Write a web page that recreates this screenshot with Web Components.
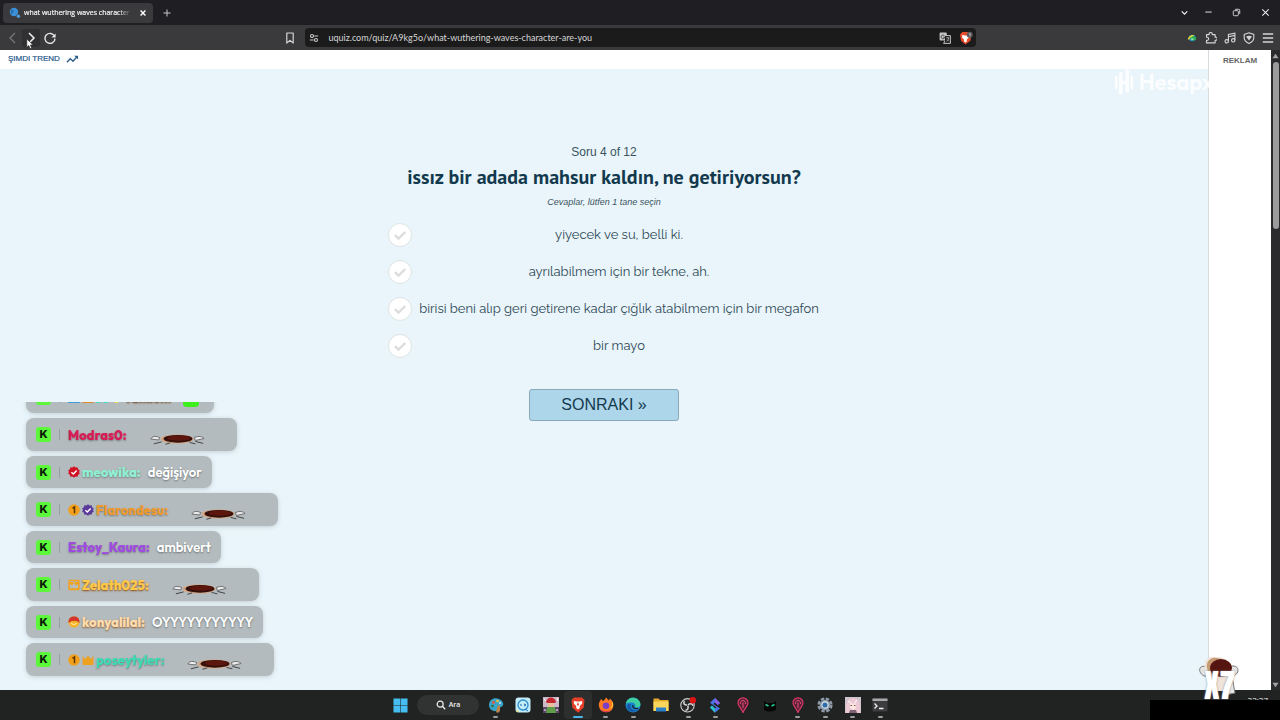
<!DOCTYPE html>
<html lang="tr">
<head>
<meta charset="utf-8">
<meta name="viewport" content="width=device-width, initial-scale=1">
<title>what wuthering waves character are you</title>
<style>
  html, body { margin: 0; height: 100%; }
  body { font-family: "Open Sans", "Noto Sans", sans-serif; background: #1f1e23; overflow: hidden; }
</style>
</head>
<body>
<desktop-screen></desktop-screen>
<script>
const ICONS = {
  back: ['0 0 12 12', '<path d="M8 1 3 6l5 5" fill="none" stroke="#77777a" stroke-width="1.3"/>'],
  forward: ['0 0 12 12', '<path d="M4 1l5 5-5 5" fill="none" stroke="#eee" stroke-width="1.5"/>'],
  reload: ['0 0 12 12', '<path d="M10.6 4.4A5 5 0 1 0 11 6.6" fill="none" stroke="#e4e4e4" stroke-width="1.4"/><path d="M11.6 1.4v4.2H7.4z" fill="#e4e4e4"/>'],
  bookmark: ['0 0 12 12', '<path d="M2.8 1h6.4v10L6 8.4 2.8 11z" fill="none" stroke="#d4d4d4" stroke-width="1.2" stroke-linejoin="round"/>'],
  tune: ['0 0 12 12', '<g fill="none" stroke="#c9c9c9" stroke-width="1.3"><circle cx="3.6" cy="3.6" r="1.8"/><path d="M6.3 3.6H11M1 8.4h4.700"/><circle cx="8.4" cy="8.4" r="1.8"/></g>'],
  translate: ['0 0 12 12', '<rect x=".6" y=".6" width="7.2" height="8" rx="1" fill="#c4c4c4"/><path d="M6 3.6h5.4v7.8H4.6l1.4-2.6" fill="#1b1b1c" stroke="#c4c4c4"/><path d="M5.400 3.600a1.900 1.900 0 1 0 0 2.600V5H4.200" fill="none" stroke="#333" stroke-width=".8"/><path d="M7.200 5.800h3.200M8.800 5v.8M7.600 9.400c1.300-.7 2-1.800 2.100-3.400M8 7.400l2 2" fill="none" stroke="#c4c4c4" stroke-width=".7"/>'],
  lion: ['0 0 14 14', '<path d="M3.4 1h6l3 2.6-1 6.200L6.400 13.400 2 9.800l-1-6.200z" fill="#e8492a"/><path d="M3.400 3.800l2 .6h2.200l2-.6.2 2.600-2 2.200v2l-1.400 1-1.400-1v-2L3 6.400z" fill="#fff"/><circle cx="10.700" cy="3.800" r="3" fill="#5a5a5d"/><path d="M10.200 2.800l.9-.5v3" stroke="#ddd" stroke-width=".7" fill="none"/>'],
  trend: ['0 0 14 10', '<path d="M1 8.600l3.600-3.800 3 2.600L12 2.400" fill="none" stroke="#2d5d8c" stroke-width="1.5"/><path d="M8.800 1.400h4.200v4.200z" fill="#2d5d8c"/>'],
  plus: ['0 0 12 12', '<path d="M6 2.500v7M2.500 6h7" stroke="#c8c8cb" stroke-width="1" fill="none"/>'],
  close: ['0 0 12 12', '<path d="M2.500 2.500l7 7m0-7l-7 7" stroke="#eee" stroke-width="1.1" fill="none"/>'],
  tabclose: ['0 0 12 12', '<path d="M3.600 3.600l4.800 4.800m0-4.800L3.600 8.400" stroke="#fff" stroke-width="1.400" fill="none"/>'],
  down: ['0 0 12 12', '<path d="M3 4.800l3 3 3-3" stroke="#eee" stroke-width="1.400" fill="none"/>'],
  min: ['0 0 12 12', '<path d="M2.500 5.500h7" stroke="#ddd" stroke-width="1.100"/>'],
  max: ['0 0 12 12', '<g fill="none" stroke="#ddd"><rect x="2.500" y="4" width="5.500" height="5.500" rx="1"/><path d="M4.500 2.500h4a1 1 0 0 1 1 1v4"/></g>'],
  idm: ['0 0 12 12', '<circle cx="6.400" cy="6" r="4" fill="#2c8fd0"/><path d="M1 8.500C1 4 5 2 8.600 2.400L6.400 5z" fill="#e9d33a"/><path d="M3 6l6-3v2h2v3H8v2z" fill="#27b04b"/><path d="M5 7.400h3" stroke="#fff"/>'],
  puzzle: ['0 0 12 12', '<path d="M1.500 2.600h2.700a1.600 1.600 0 1 1 3 0h2.900v2.600a1.600 1.600 0 1 1 0 3v2.700H1.500V8.300a1.600 1.600 0 1 0 0-3z" fill="none" stroke="#d4d4d4" stroke-width="1.100" stroke-linejoin="round"/>'],
  music: ['0 0 12 12', '<g fill="none" stroke="#d4d4d4" stroke-width="1.100"><circle cx="2.700" cy="9.300" r="1.700"/><circle cx="9.200" cy="8.300" r="1.700"/><path d="M4.400 9.300V2.400l6.500-1.300v7.200M4.400 4.700l6.500-1.300"/></g>'],
  shield: ['0 0 12 12', '<path d="M6 .8l4.800 1.600v3.400c0 2.700-2 4.500-4.800 5.600C3.200 10.300 1.200 8.500 1.200 5.800V2.400z" fill="none" stroke="#d4d4d4" stroke-width="1.100"/><path d="M3 4.600c2-1.300 4-1.300 6 0L6 8.400z" fill="#d4d4d4"/>'],
  menu: ['0 0 12 12', '<path d="M.8 2h10.400M.8 6h10.400M.8 10h10.400" stroke="#d4d4d4" stroke-width="1.300"/>'],
  favicon: ['0 0 12 12', '<circle cx="5" cy="5" r="4.200" fill="#3b8fd6"/><path d="M2 3.400c2-1.600 3 .4 2 2S2 7 2 7z" fill="#276ca8"/><circle cx="9.400" cy="9.200" r="1.700" fill="#4b9fe0"/>'],
  check: ['0 0 24 24', '<path d="M7 12.200l3.500 3.400L17.300 9" fill="none" stroke="#dcdcdc" stroke-width="2.400"/>'],
  emote: ['0 0 58 12', '<path d="M10 4.500C4 2 2 4 1 6l8 1zM46 4.500c5-2 8-1 10 1l-9 2z" fill="#eee" stroke="#555" stroke-width=".8"/><ellipse cx="28" cy="6" rx="17" ry="4.600" fill="#d6a583"/><ellipse cx="29" cy="5.800" rx="15" ry="4" fill="#32100b"/><ellipse cx="30" cy="5.200" rx="12" ry="2.700" fill="#5c160e"/><path d="M12 9l-8 2M21 10l-5 1.500M41 9.600l6 1.400M47 8.500l8 2" stroke="#333" stroke-width=".9" fill="none"/>'],
  green: ['0 0 16 16', '<rect width="16" height="16" rx="4" fill="#3df01b"/>'],
  num: ['0 0 12 12', '<circle cx="6" cy="6" r="5.800" fill="#f2a01c"/><path d="M4.500 4.300L6.500 3v6.200" stroke="#5a3405" stroke-width="1.500" fill="none"/>'],
  verified: ['0 0 12 12', '<path d="M6 .2l1.600 1.200 2-.1.500 1.900 1.700 1.100L11.100 6l.7 1.700-1.700 1.100-.5 1.900-2-.1L6 11.800l-1.600-1.200-2 .1-.5-1.900L.2 7.700.9 6 .2 4.300l1.700-1.100.5-1.900 2 .1z" fill="var(--tone,#5b3a9c)"/><path d="M3.400 6.200l1.900 1.800 3.400-3.600" stroke="#fff" stroke-width="1.400" fill="none"/>'],
  crown: ['0 0 12 12', '<path d="M.6 2l2.800 3L6 1.400 8.600 5l2.800-3v9H.6z" fill="#eda11e"/>'],
  box: ['0 0 12 12', '<rect x=".4" y=".8" width="11.200" height="10.400" rx="1" fill="#f0a21c"/><path d="M2 9.200V5l2 1.400L6 4l2 2.400L10 5v4.200z" fill="#b7bdbf"/><path d="M2 2.400h3l1 1.400 1-1.400h3" fill="none" stroke="#b7bdbf"/>'],
  ball: ['0 0 12 12', '<circle cx="6" cy="6" r="5.600" fill="#f3b32a"/><path d="M.6 7C0 2 3 .4 6 .4S12 2 11.400 7C9 4 4 4 .6 7z" fill="#d5362c"/><path d="M3 7.500q3 2 6 0" stroke="#fff2b0" fill="none"/>'],
  blue: ['0 0 12 12', '<rect width="12" height="12" rx="1" fill="#3a9bdc"/>'],
  orange: ['0 0 12 12', '<rect width="12" height="12" rx="1" fill="#df8a2c"/>'],
  teal: ['0 0 12 12', '<path d="M0 0h12v12H7.500V9h-3v3H0z" fill="#43dcc0"/>'],
  bulb: ['0 0 12 12', '<path d="M4 0h5v8.500L8 12H5L4 8.500z" fill="#efe04a"/>'],
  windows: ['0 0 16 16', '<path d="M.5.5h7.200v7.200H.5zM8.300.5h7.200v7.200H8.300zM.5 8.300h7.200v7.200H.5zM8.300 8.300h7.200v7.200H8.300z" fill="#45bdf0"/>'],
  search: ['0 0 12 12', '<circle cx="5" cy="5" r="3.600" fill="none" stroke="#eee" stroke-width="1.400"/><path d="M7.600 7.600L11 11" stroke="#eee" stroke-width="1.600"/>'],
  paint: ['0 0 16 16', '<path d="M1 8c0-5 5-8 10-6s5.500 7 2 8c-2 .5-3 1.500-3.500 3-1 2.500-8.500 1-8.500-5z" fill="#37a5c8"/><path d="M8 15l1.500-6L12 8v6l-2 2z" fill="#b9854b"/><circle cx="5.500" cy="5.500" r="1.400" fill="#e8553b"/><circle cx="9.500" cy="4" r="1.300" fill="#f3c13a"/><circle cx="12" cy="6" r="1.100" fill="#c9e7f2"/><circle cx="4.500" cy="9" r="1.200" fill="#2b6c3d"/>'],
  chat: ['0 0 16 16', '<rect x=".5" y=".5" width="15" height="15" rx="3" fill="#c3ecfa"/><circle cx="8" cy="8" r="5" fill="none" stroke="#2d8fd1" stroke-width="1.300"/><path d="M5 8h2M9 7l2 1-2 1M10 12l3 2" stroke="#1d6eae" fill="none"/><path d="M1 12l3 3H2z" fill="#e9e264"/>'],
  game: ['0 0 16 16', '<rect width="16" height="16" fill="#cdb9c8"/><path d="M0 10h16v6H0z" fill="#5b4468"/><path d="M3 5c1-6 9-6 10 0l-1 1H4z" fill="#c52731"/><path d="M5 6h6v4H5z" fill="#e9bf9d"/><path d="M4 10h8l1 6H3z" fill="#5f9e48"/><path d="M1 2l2 2M14 1l1 3M1 13h2M13 13h2" stroke="#fff"/>'],
  brave: ['0 0 16 16', '<path d="M4 .5h8l2.500 2.500-.8 7.500L8 15.800l-5.700-5.300L1.500 3z" fill="#e6402a"/><path d="M4 4l2.600.6h2.800L12 4l.2 2.600L9.800 9v2L8 12.600 6.200 11V9L3.800 6.600z" fill="#fff"/><path d="M8 5l-1 2.500L8 9l1-1.500z" fill="#e6402a"/>'],
  firefox: ['0 0 16 16', '<path d="M2 4l1-2 2 2c2-1 2-2 3-3.500 2 2 2.500 3 2.500 3S12 2 12 1.500c3 3 4 6 3 9A7.300 7.300 0 0 1 1 9.500C.5 7 1 5.500 2 4z" fill="#ff7a22"/><path d="M12 1.500c3 4 3 8-.5 10 3.500 0 4-3.500 3.500-5.500z" fill="#ffce3b"/><circle cx="8" cy="8.800" r="3.300" fill="#7b3fc6"/><path d="M2 11c3 4 8 4 11 1-2 4-8 5-11-1z" fill="#e5305f"/>'],
  edge: ['0 0 16 16', '<circle cx="8" cy="8" r="7.500" fill="#1c82cf"/><path d="M1 6.500C2-1 14-1.500 15.500 7c0 3-3 4-5.500 3 1.500-3-1-5-4-4.500C4 5.500 2 6 1 6.500z" fill="#3dcf9f"/><path d="M6 7c-2 3 1 7 6 6-3 3-9 2-10-3C1.500 8 4 6 6 7z" fill="#155ba5"/><path d="M8 8c-1 2 1 4 5 3.500" stroke="#20232a" stroke-width="1.300" fill="none"/>'],
  folder: ['0 0 16 16', '<path d="M.5 1.500h5L7 3h8.500v11H.5z" fill="#e8ab2c"/><path d="M.5 4.500h15V14H.5z" fill="#fbd65d"/><path d="M3 10.500h10V14.500H3z" fill="#2b7fcb"/>'],
  obs: ['0 0 16 16', '<circle cx="7.500" cy="8.300" r="6.700" fill="#28282a" stroke="#d0d0d0" stroke-width="1.100"/><path d="M7 8c-3 0-4-2-2.500-4M8 8c2-2 4.500-1.500 5 .8M7.700 8.700c1.200 2.500 0 4.500-2.300 4.600" fill="none" stroke="#d0d0d0" stroke-width="1.600"/><circle cx="12.800" cy="3.200" r="3.200" fill="#e11414"/>'],
  gem: ['0 0 16 16', '<path d="M8 1l5 5-2.200 2L8 5.400 6.400 7 13 11.500 8 15.800 3 10.500l2-2 3 3 1.300-1.300L3 5.800z" fill="#4a74e8"/><path d="M8 1l5 5-2.200 2L8 5.400z" fill="#8b5ce6"/><path d="M3 10.500l2-2 3 3v4.300z" fill="#29c2c8"/>'],
  pin: ['0 0 16 16', '<path d="M8 15.500C6.500 11.500 3 9.500 3 5.800a5 5 0 0 1 10 0c0 3.700-3.500 5.700-5 9.700z" fill="#5d2038" stroke="#d93a68" stroke-width="1.200"/><path d="M8 11V5.500M5.700 7a2.500 2.500 0 1 1 4.600 0" fill="none" stroke="#e5507a"/>'],
  cat: ['0 0 16 16', '<path d="M2 4l3 2h6l3-2v9q-6 3-12 0z" fill="#050706"/><path d="M3.500 7.500l3 1.500M12.500 7.500l-3 1.500" stroke="#23c78b" stroke-width="1.600"/>'],
  gear: ['0 0 16 16', '<circle cx="8" cy="8" r="6.300" fill="none" stroke="#8d99a6" stroke-width="2.600" stroke-dasharray="3.400 1.550"/><circle cx="8" cy="8" r="5.300" fill="#8d99a6"/><circle cx="8" cy="8" r="3.100" fill="#2d6ea8" stroke="#dfe7ee" stroke-width="1.100"/>'],
  anime: ['0 0 16 16', '<rect width="16" height="16" fill="#cfc3cc"/><path d="M1 16C0 6 3 1 8 1s8 5 7 15z" fill="#edc9d3"/><path d="M5 7h6v4l-3 2-3-2z" fill="#fae7e0"/><path d="M5.500 8.500h1.500M9 8.500h1.500" stroke="#87435c" stroke-width="1.200"/><path d="M5 13h6l1 3H4z" fill="#7e6376"/><path d="M3 4l4 3M12 3L9 7" stroke="#fff"/>'],
  terminal: ['0 0 16 16', '<rect x=".5" y="1.500" width="15" height="13" rx="1" fill="#3d3d40"/><path d="M.5 1.500h15v2.500H.5z" fill="#a9a9ac"/><path d="M2.500 6.500L5 9l-2.500 2.500M7 11.500h4.500" stroke="#eee" stroke-width="1.300" fill="none"/>'],
  brand: ['0 0 22 28', '<g fill="#fff"><rect x="1" y="7" width="3" height="15" rx="1.500"/><path d="M5.500 5a2 2 0 0 1 4 0v7.500h3V1a1 1 0 0 1 4 3v20a2 2 0 0 1-4 0v-7.500h-3V27a1 1 0 0 1-4-3z"/><rect x="18" y="7" width="3" height="15" rx="1.500"/></g>'],
  cup: ['0 0 44 44', '<path d="M10 13C3 10 1 18 8 22l5 0M36 12c8-1 8 9 0 10l3 17-10 2" fill="#e4e4e4" stroke="#777"/><path d="M9 16C7 6 13 2 19 3c10 0 18 4 17 18l-4 16H14z" fill="#efe3da"/><path d="M12 17C8 8 15 3 20 4l6 1-8 8-1 11z" fill="#c69b74"/><ellipse cx="25" cy="14" rx="11" ry="9" fill="#551511"/>'],
  cursor: ['0 0 10 14', '<path d="M1 .8v10.400l2.500-2.200 1.700 3.800 2-.9-1.700-3.700H9z" fill="#fff" stroke="#222" stroke-width=".8"/>'],
  up: ['0 0 8 6', '<path d="M4 .5l3.500 5h-7z" fill="#a2a2a2"/>'],
  dn: ['0 0 8 6', '<path d="M4 5.500L.5.500h7z" fill="#a2a2a2"/>'],
};

function component(name, css, html, setup) {
  const template = document.createElement('template');
  template.innerHTML = `<style>*{box-sizing:border-box}${css}</style>${html}`;
  customElements.define(name, class extends HTMLElement {
    connectedCallback() {
      if (this.shadowRoot) return;
      this.attachShadow({ mode: 'open' }).append(template.content.cloneNode(true));
      if (setup) setup(this, this.shadowRoot);
    }
  });
}

function makeIcon(name) {
  const icon = document.createElement('ui-icon');
  icon.setAttribute('name', name);
  return icon;
}

component('ui-icon',
  `:host{display:inline-flex;flex:none;width:12px;height:12px} svg{display:block;width:100%;height:100%}`,
  `<svg aria-hidden="true"></svg>`,
  (host, root) => {
    const [box, body] = ICONS[host.getAttribute('name')];
    const svg = root.querySelector('svg');
    svg.setAttribute('viewBox', box);
    svg.innerHTML = body;
  });

component('icon-button',
  `:host{display:inline-flex;flex:none}
   button{display:grid;place-items:center;width:var(--w,18px);height:18px;padding:0;border:0;border-radius:3px;background:var(--bg,none)}
   ui-icon{width:var(--icon,12px);height:var(--icon,12px)}`,
  `<button type="button"></button>`,
  (host, root) => {
    const button = root.querySelector('button');
    button.setAttribute('aria-label', host.getAttribute('label'));
    button.append(makeIcon(host.getAttribute('icon')));
  });

component('tab-strip',
  `:host{display:flex;align-items:center;height:25px;padding:0 0 0 3px;background:#1f1e23}
   .tab{display:flex;align-items:center;gap:3px;width:150px;height:20px;padding:0 1px 0 6px;border-radius:4px;background:#3a3a3d}
   .title{flex:1;min-width:0;overflow:hidden;white-space:nowrap;font:7px/12px "Open Sans","Noto Sans",sans-serif;-webkit-text-stroke:.2px #f2f2f2;color:#f2f2f2;-webkit-mask-image:linear-gradient(90deg,#000 88%,transparent);mask-image:linear-gradient(90deg,#000 88%,transparent)}
   .windowctl{display:flex;margin-left:auto}
   .windowctl icon-button{--w:28px;--icon:11px}
   .new{margin-left:5px}`,
  `<div class="tab"><ui-icon name="favicon"></ui-icon><span class="title">what wuthering waves character are you</span><icon-button icon="tabclose" label="Sekmeyi kapat"></icon-button></div>
   <icon-button class="new" icon="plus" label="Yeni sekme"></icon-button>
   <div class="windowctl"><icon-button icon="down" label="Sekme ara" style="--w:20px"></icon-button><icon-button icon="min" label="Küçült"></icon-button><icon-button icon="max" label="Geri yükle"></icon-button><icon-button icon="close" label="Kapat" style="--w:30px"></icon-button></div>`);

component('browser-toolbar',
  `:host{display:flex;align-items:center;height:25px;background:#3a3a3c}
   .nav{flex:279 1 0;display:flex;padding-left:4px}
   .mid{flex:698 1 0;display:flex;align-items:center;gap:6px}
   .ext{flex:303 1 0;display:flex;justify-content:flex-end;padding-right:3px}
   .nav,.mid,.ext{min-width:0;box-sizing:border-box}
   .url{flex:1;display:flex;align-items:center;height:19px;border-radius:4px;background:#1b1b1c}
   input{flex:1;min-width:0;height:18px;padding:0 0 0 5px;border:0;background:none;outline:0;color:#d6d6d6;font:9px/18px Lato,"Open Sans",sans-serif}
   .nav icon-button:nth-child(2){--bg:#303033}
   .ext icon-button{--w:19px}`,
  `<div class="nav"><icon-button icon="back" label="Geri"></icon-button><icon-button icon="forward" label="İleri"></icon-button><icon-button icon="reload" label="Yenile" style="--w:20px"></icon-button></div>
   <div class="mid"><icon-button icon="bookmark" label="Yer işareti"></icon-button>
     <div class="url"><icon-button icon="tune" label="Site bilgileri" style="--icon:10px"></icon-button><input type="text" aria-label="Adres" value="uquiz.com/quiz/A9kg5o/what-wuthering-waves-character-are-you"><icon-button icon="translate" label="Çevir" style="--w:22px"></icon-button><icon-button icon="lion" label="Brave Shields" style="--w:20px;--icon:14px"></icon-button></div></div>
   <div class="ext"><icon-button icon="idm" label="IDM" style="--icon:10px"></icon-button><icon-button icon="puzzle" label="Uzantılar"></icon-button><icon-button icon="music" label="Medya"></icon-button><icon-button icon="shield" label="VPN"></icon-button><icon-button icon="menu" label="Menü"></icon-button></div>`);

component('quiz-answer',
  `:host{display:block}
   label{display:flex;align-items:center;gap:7px;height:37px;padding-right:1px}
   .mark{display:grid;flex:none;width:24px;height:24px}
   .mark>*{grid-area:1/1}
   input{appearance:none;width:24px;height:24px;margin:0;border:1px solid #dfe3e4;border-radius:50%;background:#fff}
   ui-icon{width:24px;height:24px;pointer-events:none}
   .text{flex:1;text-align:center;white-space:nowrap;font:13px/20px Raleway,Lato,sans-serif;color:#2f4957}`,
  `<label><span class="mark"><input type="radio" name="answer"><ui-icon name="check"></ui-icon></span><span class="text"><slot></slot></span></label>`);

component('quiz-form',
  `:host{display:block;flex:1;background:#e9f5fa;font-family:"Liberation Sans",Arial,sans-serif;text-align:center}
   form{display:flex;flex-direction:column;align-items:center;padding-top:74px}
   .count{font-size:12px;line-height:18px;color:#3b5461}
   h1{margin:0;font:700 20px/32px "PT Sans","Noto Sans",sans-serif;color:#12394d}
   .hint{margin:0 0 5px;font-size:9px;line-height:18px;font-style:italic;color:#3b5461}
   .answers{width:432px;max-width:100%}
   button{margin-top:25px;width:150px;height:32px;padding:0;border:1px solid #8aa9b8;border-radius:3px;background:#aed6ea;color:#12394d;font:16px/30px "Liberation Sans",Arial,sans-serif}`,
  `<form><div class="count">Soru 4 of 12</div><h1>issız bir adada mahsur kaldın, ne getiriyorsun?</h1><p class="hint">Cevaplar, lütfen 1 tane seçin</p>
   <div class="answers"><quiz-answer>yiyecek ve su, belli ki.</quiz-answer><quiz-answer>ayrılabilmem için bir tekne, ah.</quiz-answer><quiz-answer>birisi beni alıp geri getirene kadar çığlık atabilmem için bir megafon</quiz-answer><quiz-answer>bir mayo</quiz-answer></div>
   <button type="button">SONRAKI »</button></form>`);

component('scroll-bar',
  `:host{display:flex;flex-direction:column;align-items:center;width:9px;padding:3px 0 2px;background:#2b2b2d}
   ui-icon{width:7px;height:6px}
   .track{flex:1;width:6px;margin:3px 0}
   .thumb{height:27%;border-radius:3px;background:#9c9c9c}`,
  `<ui-icon name="up"></ui-icon><div class="track"><div class="thumb"></div></div><ui-icon name="dn"></ui-icon>`);

component('quiz-page',
  `:host{display:flex;min-height:0;background:#fff}
   main{flex:1;display:flex;flex-direction:column}
   nav{display:flex;height:19px;padding-left:8px}
   a{display:flex;align-items:center;gap:6px;height:18px;font:8px/18px "Liberation Sans",Arial,sans-serif;color:#24578a;text-decoration:none;-webkit-text-stroke:.2px #24578a}
   a ui-icon{width:13px;height:10px}
   aside{width:63px;border-left:1px solid #d5dadd;padding-top:5px;text-align:center;font:700 8px/12px "Liberation Sans",Arial,sans-serif;color:#666}`,
  `<main><nav><a href="#trend">ŞIMDI TREND <ui-icon name="trend"></ui-icon></a></nav><quiz-form></quiz-form></main><aside>REKLAM</aside><scroll-bar></scroll-bar>`);

component('chat-message',
  `:host{display:flex;flex:none;align-items:center;width:max-content;height:32px;box-sizing:border-box;padding:0 10px;border-radius:8px;background:#b3bbbe;box-shadow:0 1px 4px #8a979c66;font:600 13px/20px Outfit,Lato,sans-serif;color:#fff}
   :host([emote]){height:33px}
   .k{display:grid;place-items:center;width:15px;height:15px;border-radius:3px;background:#5cf63a;color:#0b1a07;font:800 11px/15px Inter,sans-serif}
   .bar{width:1px;height:11px;margin:0 8px;background:#969fa2}
   .badges{display:flex;gap:2px;margin-right:2px}
   .badges:empty{display:none}
   b{font-weight:800;color:var(--name);text-shadow:0 1px 2px var(--glow,#0005)}
   .body{margin-left:7px;text-shadow:0 1px 2px #0006}
   :host([emote]) .body{display:grid;place-items:center;width:90px;height:12px;margin:9px 4px 0 6px}
   .body ui-icon{width:56px;height:12px}`,
  `<span class="k">K</span><span class="bar"></span><span class="badges"></span><b></b><span class="body"><slot></slot></span>`,
  (host, root) => {
    root.querySelector('b').textContent = host.getAttribute('name') + ':';
    for (const name of (host.getAttribute('badges') || '').split(' ').filter(Boolean))
      root.querySelector('.badges').append(makeIcon(name));
    if (host.hasAttribute('emote')) root.querySelector('.body').append(makeIcon('emote'));
  });

component('chat-overlay',
  `:host{display:flex;flex-direction:column;justify-content:flex-end;align-items:flex-start;gap:5px;box-sizing:border-box;overflow:hidden;padding:0 20px 14px}
   .reply{width:16px;height:16px;margin:0 5px 0 4px;vertical-align:middle}`,
  `<chat-message name="Talkien" badges="blue orange teal bulb" style="--name:#fff0b8;--glow:#6b3a10"><ui-icon class="reply" name="green"></ui-icon></chat-message>
   <chat-message name="Modras0" emote style="--name:#d81b56"></chat-message>
   <chat-message name="meowika" badges="verified" style="--name:#8ff0d2;--tone:#d01224">değişiyor</chat-message>
   <chat-message name="Flarondesu" badges="num verified" emote style="--name:#ee9a2e"></chat-message>
   <chat-message name="Estoy_Kaura" style="--name:#a04be0">ambivert</chat-message>
   <chat-message name="Zelath025" badges="box" emote style="--name:#ffc94a;--glow:#8c4a12"></chat-message>
   <chat-message name="konyalilal" badges="ball" style="--name:#ffdcae;--glow:#8a5a2a">OYYYYYYYYYYY</chat-message>
   <chat-message name="poseytyler" badges="num crown" emote style="--name:#3fd9b4"></chat-message>`);

component('task-bar',
  `:host{display:flex;align-items:center;justify-content:center;gap:3px;height:30px;background:#202322}
   button{display:grid;place-items:center;padding:0;border:0;border-radius:4px;background:none}
   .start{width:28px;height:28px}
   .start ui-icon{width:15px;height:15px}
   .search{display:flex;align-items:center;justify-content:center;gap:3px;width:62px;height:20px;border-radius:10px;background:#303332;color:#f0f0f0;font:600 7px/12px "Open Sans",sans-serif}
   .search ui-icon{width:10px;height:10px}
   .apps{display:flex;width:412px}
   .apps button{flex:1;height:28px;padding-top:2px;grid-template-rows:22px 3px;align-content:center}
   .apps ui-icon{width:16px;height:16px}
   .apps i{width:5px;height:2px;border-radius:1px;background:#9a9d9c}
   .apps .off i{visibility:hidden}
   .apps .on{background:#2c2f2e}
   .apps .on i{width:10px;background:#4db4e8}`,
  `<button class="start" type="button" aria-label="Başlat"><ui-icon name="windows"></ui-icon></button><button class="search" type="button"><ui-icon name="search"></ui-icon>Ara</button><div class="apps"></div>`,
  (host, root) => {
    const apps = ['paint', 'chat off', 'game off', 'brave on', 'firefox', 'edge', 'folder off', 'obs', 'gem', 'pin off', 'cat off', 'pin', 'gear', 'anime', 'terminal'];
    root.querySelector('.apps').innerHTML = apps.map(app => {
      const [icon, state = ''] = app.split(' ');
      return `<button type="button" class="${state}" aria-label="${icon}"><ui-icon name="${icon}"></ui-icon><i></i></button>`;
    }).join('');
  });

component('desktop-screen',
  `:host{display:flex;flex-direction:column;height:100vh;position:relative;overflow:hidden}
   quiz-page{flex:1}
   chat-overlay{position:absolute;left:6px;bottom:30px;height:288px}
   .brand{position:absolute;top:68px;right:66px;display:flex;align-items:center;gap:5px;width:100px;height:28px;overflow:hidden;color:#fff;font:600 22px/24px Outfit,Lato,sans-serif;opacity:.85}
   .brand ui-icon{width:20px;height:28px}
   .cursor{position:absolute;left:26px;top:38px;width:8px;height:12px}
   .clock{position:absolute;right:12px;bottom:14px;color:#eee;font:8px/12px "Open Sans",sans-serif}
   .sticker{position:absolute;right:36px;bottom:20px;width:48px;height:46px;overflow:hidden}
   .sticker ui-icon{width:44px;height:44px}
   .sticker b{position:absolute;left:8px;top:12px;color:#fff;font:400 32px/40px Anton,"Roboto Condensed",Roboto,sans-serif;text-shadow:0 0 2px #888}
   .mask{position:absolute;right:0;bottom:0;width:130px;height:20px;background:#000}`,
  `<tab-strip></tab-strip><browser-toolbar></browser-toolbar><quiz-page></quiz-page><task-bar></task-bar>
   <div class="brand"><ui-icon name="brand"></ui-icon><span>Hesapx</span></div>
   <chat-overlay></chat-overlay>
   <div class="clock">22:27</div>
   <div class="mask"></div>
   <div class="sticker"><ui-icon name="cup"></ui-icon><b>X7</b></div>
   <ui-icon class="cursor" name="cursor"></ui-icon>`);
</script>
</body>
</html>
